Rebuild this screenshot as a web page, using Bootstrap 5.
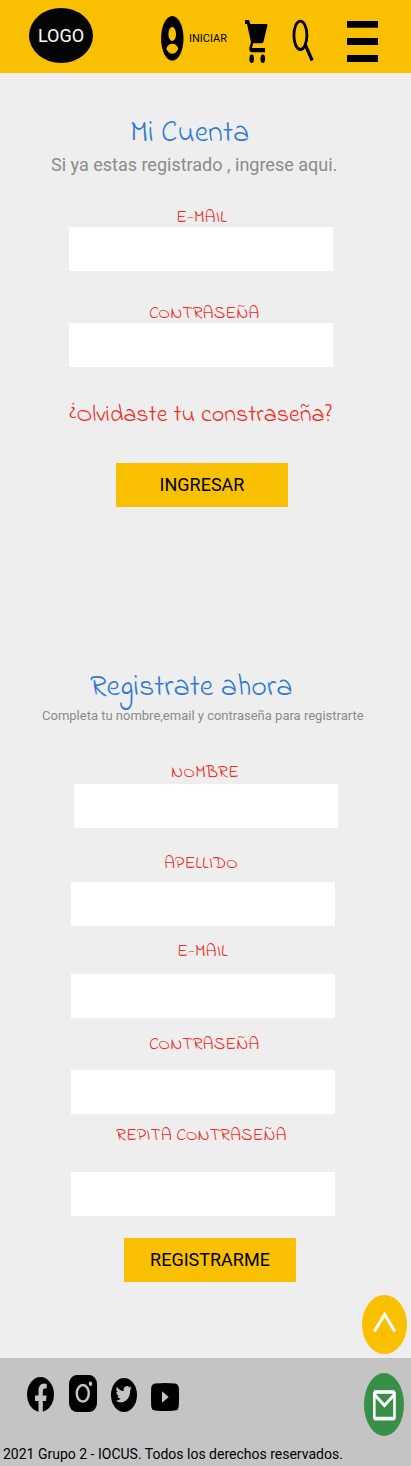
<!DOCTYPE html>
<html lang="es">
<head>
<meta charset="utf-8">
<meta name="viewport" content="width=device-width, initial-scale=1">
<title>Mi Cuenta</title>
<link href="https://cdn.jsdelivr.net/npm/bootstrap@5.3.0/dist/css/bootstrap.min.css" rel="stylesheet">
<style>
body{background:#eee;font-family:Roboto,sans-serif;color:#000;overflow-x:hidden}
svg{display:block;flex:none}
.topbar{height:73px;background:#f9c002}
.logo{width:64px;height:55px;margin:8px 0 0 29px;border-radius:50%;background:#050505;color:#fff;font-size:18px}
.user{margin:16px 0 0 68px}
.iniciar{font-size:11px;line-height:14px;margin:32px 0 0 5px;width:40px;color:#000}
.cart{margin:20px 0 0 16px}
.search{margin:19px 0 0 24px}
.menu{margin:21px 0 0 33px}
main{height:1285px}
.hand{font-family:"Indie Flower",cursive;font-weight:400;white-space:nowrap}
.title{font-size:30px;line-height:34px;color:#2e7bd1;margin:0}
.t-login{padding:44px 0 0 130px}
.t-reg{padding:164px 0 0 90px}
.sub{color:#8b8b8b;white-space:nowrap;margin:0}
.s-login{font-size:18px;line-height:24px;padding:2px 0 0 51px}
.s-reg{font-size:13px;line-height:20px;padding:1px 0 0 42px}
.lbl{display:block;font-size:18px;line-height:18px;color:#f22c1e}
.l-mail{margin:32px 0 0 176px}
.l-pass{margin:34px 0 0 149px}
.r-name{margin:38px 0 2px 171px}
.r-last{margin:27px 0 9px 164px}
.r-mail{margin:17px 0 13px 177px}
.r-pass{margin:18px 0 16px 149px}
.r-rep{margin:13px 0 27px 116px}
.field{width:264px;height:44px;border-radius:0;border:0;background:#fff}
.f-login{margin-left:69px}.f-name{margin-left:74px}.f-reg{margin-left:71px}
.forgot{display:block;width:max-content;font-size:24px;line-height:30px;margin:34px 0 0 70px;color:#f22c1e;text-decoration:none}
.action{display:block;width:172px;height:44px;border-radius:0;border:0;background:#f9c002!important;color:#000!important;font-size:18px;padding:0 0 1px}
.a-login{margin:32px 0 0 116px}
.a-reg{margin:22px 0 0 124px}
footer{height:108px;background:#c4c4c4}
.social{height:84px;padding-left:27px}
.copy{font-size:14px;line-height:24px;padding-left:3px;white-space:nowrap}
.up{left:362px;top:1295px}
.mail{left:364px;top:1373px}
</style>
</head>
<body class="position-relative">
<header class="topbar d-flex align-items-start">
  <a class="logo d-flex align-items-center justify-content-center text-decoration-none" href="#">LOGO</a>
  <svg class="user" width="23" height="45" viewBox="0 0 23 45"><ellipse cx="11.3" cy="22.4" rx="11.2" ry="22.4"/><g fill="#f9c002"><ellipse cx="11.2" cy="18" rx="3.8" ry="7.1"/><path d="M5.3 32.7Q7 27.8 11.3 27.8T17.3 32.7Q15 37.8 11.3 37.8T5.3 32.7Z"/></g></svg>
  <a class="iniciar text-decoration-none" href="#">INICIAR</a>
  <svg class="cart" width="23" height="44" viewBox="0 0 23 44"><path d="M0 0H4L5.3 4H21.5Q22.8 4 22.3 5.8L18.6 21.5Q18 23.3 16.7 23.3H8.2L7 27.2Q6.9 28 8 28H20V32.2H7Q4.400 32.200 4.300 29Q4.200 27.500 5 25.800L6 22 2 4H0Z"/><ellipse cx="6.700" cy="38.800" rx="2.300" ry="4.300"/><ellipse cx="17.800" cy="38.800" rx="2.300" ry="4.300"/></svg>
  <svg class="search" width="22" height="44" viewBox="0 0 22 44" fill="none" stroke="#000"><ellipse cx="8.400" cy="16.300" rx="6.500" ry="14.200" stroke-width="2.800"/><path d="M13 28L14 27.500 20.200 41.500" stroke-width="3.200"/></svg>
  <svg class="menu" width="31" height="41" viewBox="0 0 31 41"><path d="M0 0H31V6.700H0ZM0 17H31V24H0ZM0 34H31V41H0Z"/></svg>
</header>
<main>
  <form>
    <h1 class="hand title t-login">Mi Cuenta</h1>
    <p class="sub s-login">Si ya estas registrado , ingrese aqui.</p>
    <label class="hand lbl l-mail" for="lm">E-MAIL</label>
    <input class="form-control field f-login" id="lm" type="email">
    <label class="hand lbl l-pass" for="lp">CONTRASEÑA</label>
    <input class="form-control field f-login" id="lp" type="password">
    <a class="hand forgot" href="#">¿Olvidaste tu constraseña?</a>
    <button class="btn action a-login" type="button">INGRESAR</button>
  </form>
  <form>
    <h2 class="hand title t-reg">Registrate ahora</h2>
    <p class="sub s-reg">Completa tu nombre,email y contraseña para registrarte</p>
    <label class="hand lbl r-name" for="rn">NOMBRE</label>
    <input class="form-control field f-name" id="rn" type="text">
    <label class="hand lbl r-last" for="ra">APELLIDO</label>
    <input class="form-control field f-reg" id="ra" type="text">
    <label class="hand lbl r-mail" for="rm">E-MAIL</label>
    <input class="form-control field f-reg" id="rm" type="email">
    <label class="hand lbl r-pass" for="rp">CONTRASEÑA</label>
    <input class="form-control field f-reg" id="rp" type="password">
    <label class="hand lbl r-rep" for="rr">REPITA CONTRASEÑA</label>
    <input class="form-control field f-reg" id="rr" type="password">
    <button class="btn action a-reg" type="button">REGISTRARME</button>
  </form>
</main>
<footer>
  <div class="social">
    <svg width="153" height="84" viewBox="0 0 153 84">
      <ellipse cx="13.500" cy="36.500" rx="13.500" ry="17.500"/>
      <path fill="#c4c4c4" d="M11.500 54V43H8V37.500H11.500V33Q11.500 25.500 17 25.500Q18.500 25.500 19.700 26V30.500H17.500Q15.800 30.500 15.800 33.500V37.500H19.600L19 43H15.800V54Z"/>
      <rect x="42" y="17" width="28" height="37" rx="7.500" ry="9"/>
      <ellipse cx="55.800" cy="35.300" rx="6" ry="8.300" fill="none" stroke="#c4c4c4" stroke-width="2.500"/>
      <ellipse cx="63.500" cy="25.700" rx="1.700" ry="2.300" fill="#c4c4c4"/>
      <ellipse cx="97" cy="37" rx="13" ry="17"/>
      <path fill="#c4c4c4" transform="translate(88.800 25.500) scale(1 1.250)" d="M16 3.500a6.500 6.500 0 0 1-1.900.5 3.300 3.300 0 0 0 1.400-1.800 6.500 6.500 0 0 1-2.100.8A3.300 3.300 0 0 0 7.800 6 9.300 9.300 0 0 1 1.100 2.600a3.300 3.300 0 0 0 1 4.400 3.300 3.300 0 0 1-1.500-.4 3.300 3.300 0 0 0 2.600 3.200 3.300 3.300 0 0 1-1.500.1 3.300 3.300 0 0 0 3.100 2.300A6.600 6.600 0 0 1 0 13.500 9.300 9.300 0 0 0 14.400 5.200 6.700 6.700 0 0 0 16 3.500Z"/>
      <path d="M128 25.500Q138 24.500 148 25.500Q151.500 26 151.800 30Q152.300 39 151.800 48Q151.500 52 148 52.500Q138 53.500 128 52.500Q124.500 52 124.200 48Q123.700 39 124.200 30Q124.500 26 128 25.500Z"/>
      <path fill="#c4c4c4" d="M135 33.300L141.700 39 135 44.700Z"/>
    </svg>
  </div>
  <div class="copy">2021 Grupo 2 - IOCUS. Todos los derechos reservados.</div>
</footer>
<a class="up position-absolute" href="#" aria-label="Subir"><svg width="45" height="59" viewBox="0 0 45 59"><ellipse cx="22.500" cy="29.500" rx="22.500" ry="29.500" fill="#f9c002"/><path d="M12.300 36.500L22.600 19.500 32.900 36.500" fill="none" stroke="#fff" stroke-width="3"/></svg></a>
<a class="mail position-absolute" href="#" aria-label="Correo"><svg width="40" height="63" viewBox="0 0 40 63"><ellipse cx="20" cy="31.500" rx="20" ry="31.500" fill="#388f45"/><rect x="10.300" y="19" width="20.200" height="27" rx="1.500" fill="none" stroke="#fff" stroke-width="2.600"/><path d="M10 19H30.500M10 45.500H30.500" stroke="#fff" stroke-width="3.600"/><path d="M10.500 21.500L20.400 32.500 30.500 21.500" fill="none" stroke="#fff" stroke-width="3"/></svg></a>
<script src="https://cdn.jsdelivr.net/npm/bootstrap@5.3.0/dist/js/bootstrap.bundle.min.js"></script>
</body>
</html>
